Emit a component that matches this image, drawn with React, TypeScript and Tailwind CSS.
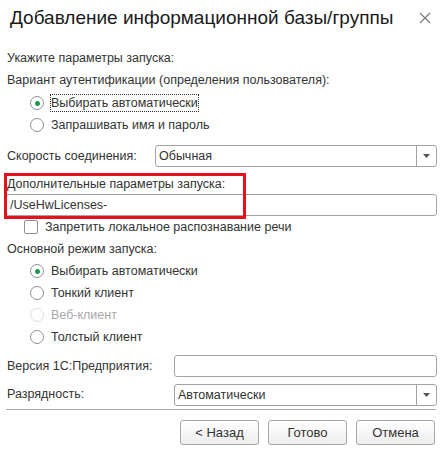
import React from 'react';

const Radio = ({ label, checked = false, disabled = false, focused = false }: { label: string; checked?: boolean; disabled?: boolean; focused?: boolean }) => (
    <div className="flex h-[22px] items-center pl-[23px]">
        <span
            className={`flex h-[14px] w-[14px] items-center justify-center rounded-full border bg-white ${
                disabled ? 'border-[#dcdcdc]' : 'border-[#8f8f8f]'
            }`}
        >
            {checked && <span className="h-[5px] w-[5px] rounded-full bg-[#1c9a4c]" />}
        </span>
        <span
            className={`ml-[7px] leading-[16px] ${disabled ? 'text-[#a8a8a8]' : 'text-[#333]'} ${
                focused ? 'outline outline-1 outline-dotted outline-[#333]' : ''
            }`}
        >
            {label}
        </span>
    </div>
);

const Combo = ({ value, className }: { value: string; className: string }) => (
    <div className={`flex h-[22px] rounded-[3px] border border-[#a3a3a3] bg-white ${className}`}>
        <div className="flex flex-1 items-center pl-[3px] text-[#333]">{value}</div>
        <div className="flex w-[20px] items-center justify-center border-l border-[#a3a3a3]">
            <svg width="7" height="4" viewBox="0 0 7 4">
                <path d="M0 0h7L3.5 4z" fill="#555" />
            </svg>
        </div>
    </div>
);

const Btn = ({ label }: { label: string }) => (
    <button className="h-[25px] w-[79px] rounded-[3px] border border-[#a6a6a6] bg-gradient-to-b from-white to-[#ededed] text-[13px] text-[#333]">
        {label}
    </button>
);

export default function App() {
    return (
        <div className="relative h-[459px] w-[444px] bg-white font-['Liberation_Sans',Arial,sans-serif] text-[12.5px] text-[#333]">
            <div className="flex h-[36px] items-center justify-between pl-[10px] pr-[13px]">
                <span className="text-[19px] text-[#1a1a1a]">Добавление информационной базы/группы</span>
                <svg width="12" height="12" viewBox="0 0 12 12">
                    <path d="M1 1l10 10M11 1L1 11" stroke="#777" strokeWidth="1.1" />
                </svg>
            </div>

            <div className="flex flex-col pl-[7px] pr-[7px]">
                <div className="mt-[11px] flex h-[22px] items-center">Укажите параметры запуска:</div>
                <div className="flex h-[23px] items-center">Вариант аутентификации (определения пользователя):</div>
                <Radio label="Выбирать автоматически" checked focused />
                <Radio label="Запрашивать имя и пароль" />

                <div className="mt-[9px] flex h-[22px] items-center">
                    <span className="w-[148px]">Скорость соединения:</span>
                    <Combo value="Обычная" className="flex-1" />
                </div>

                <div className="mt-[7px] flex h-[20px] items-center">Дополнительные параметры запуска:</div>
                <div className="ml-[-1px] flex h-[22px] items-center rounded-[3px] border border-[#a3a3a3] bg-white pl-[3px]">
                    /UseHwLicenses-
                </div>

                <div className="flex h-[22px] items-center pl-[17px]">
                    <span className="h-[14px] w-[14px] rounded-[2px] border border-[#8f8f8f] bg-white" />
                    <span className="ml-[7px]">Запретить локальное распознавание речи</span>
                </div>

                <div className="flex h-[22px] items-center">Основной режим запуска:</div>
                <Radio label="Выбирать автоматически" checked />
                <Radio label="Тонкий клиент" />
                <Radio label="Веб-клиент" disabled />
                <Radio label="Толстый клиент" />

                <div className="mt-[7px] flex h-[22px] items-center">
                    <span className="w-[167px]">Версия 1С:Предприятия:</span>
                    <div className="h-[22px] flex-1 rounded-[3px] border border-[#a3a3a3] bg-white" />
                </div>

                <div className="mt-[7px] flex h-[22px] items-center">
                    <span className="w-[167px] -mt-[2px]">Разрядность:</span>
                    <Combo value="Автоматически" className="flex-1" />
                </div>

                <div className="ml-[-1px] mr-[1px] mt-[3px] h-px bg-[#a8a8a8]" />

                <div className="mt-[10px] flex justify-end gap-[9px] pr-[2px]">
                    <Btn label="< Назад" />
                    <Btn label="Готово" />
                    <Btn label="Отмена" />
                </div>
            </div>

            <div className="pointer-events-none absolute left-[4px] top-[173px] h-[46px] w-[242px] border-[3px] border-[#e8111b]" />
        </div>
    );
}
